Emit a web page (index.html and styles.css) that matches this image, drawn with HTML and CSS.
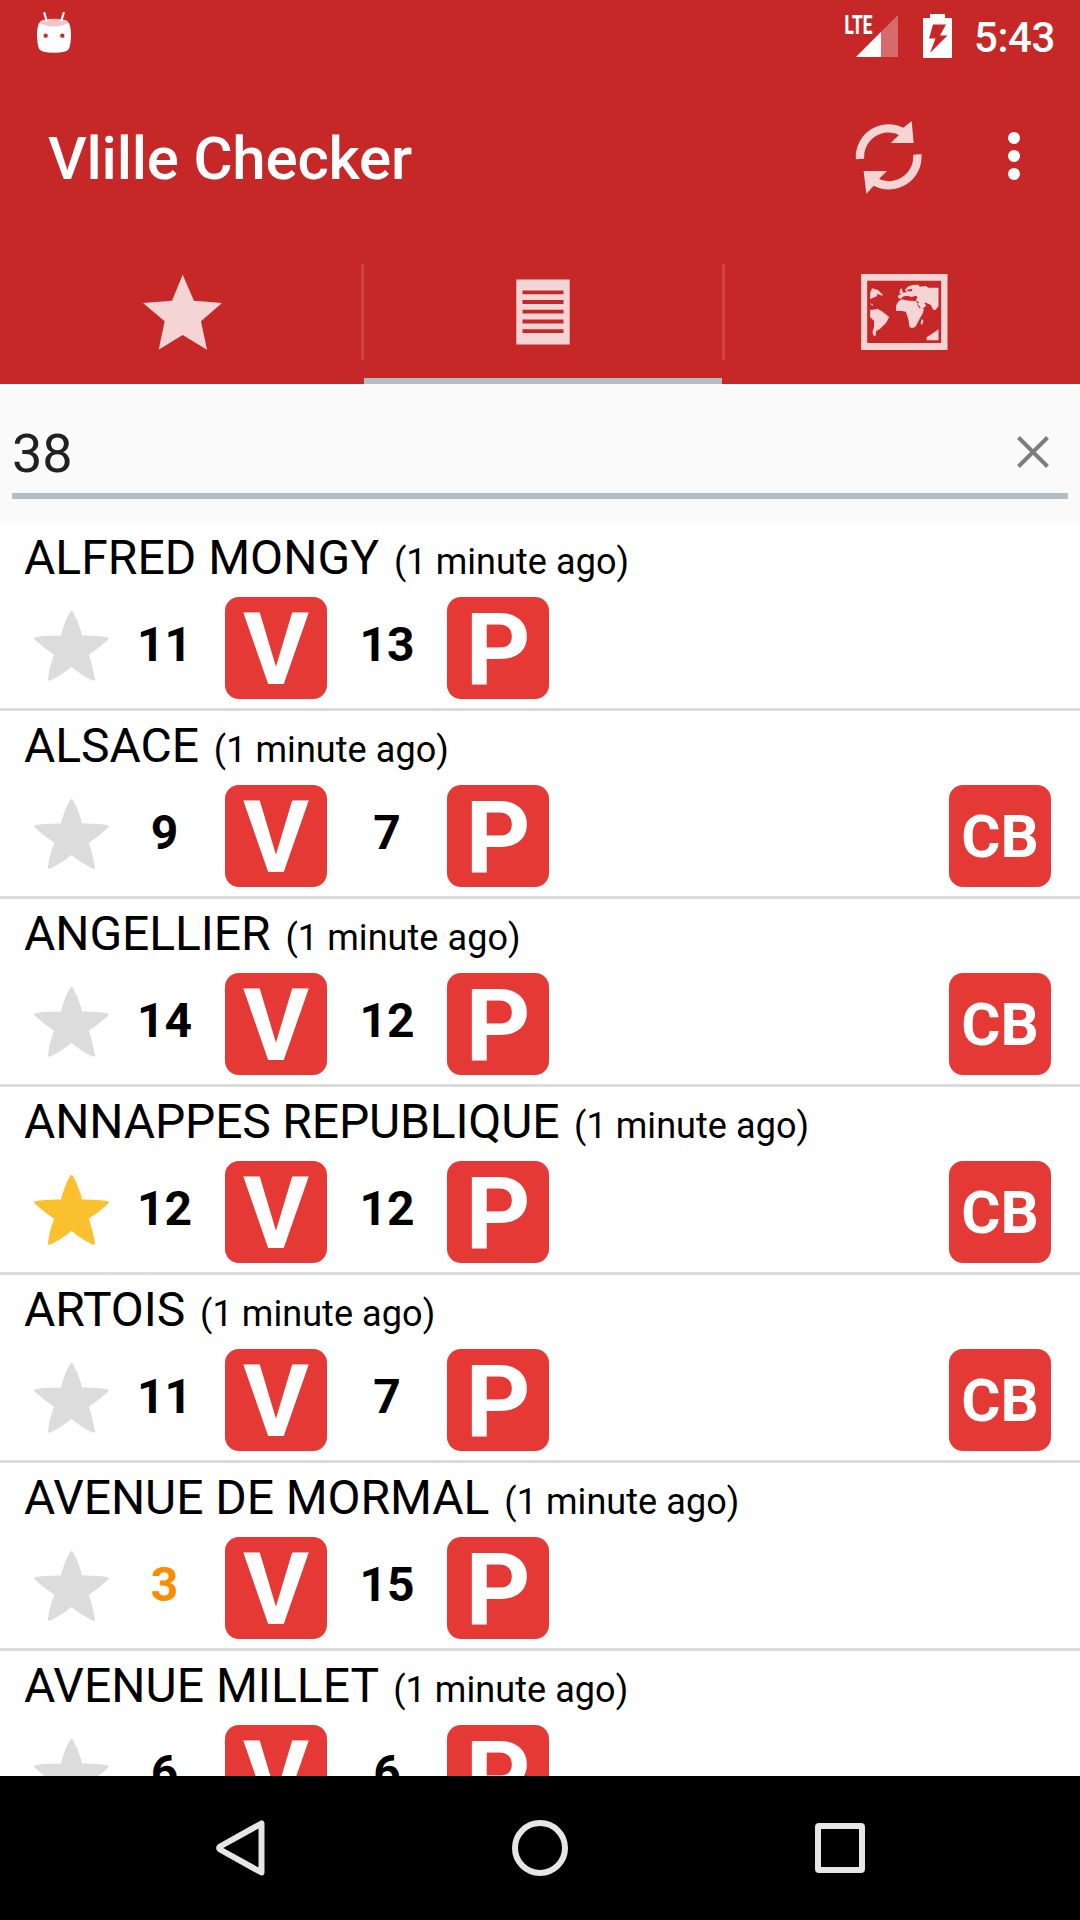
FILE: index.html
```html
<!DOCTYPE html>
<html lang="en">
<head>
<meta charset="utf-8">
<title>Vlille Checker</title>
<link rel="stylesheet" href="styles.css">
</head>
<body>
<svg class="defs" width="0" height="0">
  <symbol id="star" viewBox="0 0 226 211">
    <path d="M108 4Q113-4 118 4Q135 35 145 74Q190 73 222 79Q228 81 224 86Q195 113 165 132Q176 163 184 206Q184 212 178 210Q143 194 113 169Q83 194 48 210Q42 212 42 206Q47 165 61 132Q31 113 2 86Q-2 81 4 79Q36 73 81 74Q91 35 108 4Z"/>
  </symbol>
</svg>
<header class="header">
  <div class="status">
    <svg class="marsh" width="34" height="41" viewBox="0 0 102 123">
      <ellipse cx="51" cy="32" rx="43" ry="12" fill="#f1c4c5"/>
      <path d="M6 32Q28 43 51 43T96 32Q102 46 102 65Q102 95 96 110Q90 122 51 122T6 110Q0 95 0 65Q0 46 6 32Z" fill="#fff"/>
      <path d="M22 3L29 27M80 3L73 27" stroke="#fff" stroke-width="6.500" stroke-linecap="round"/>
      <circle cx="26" cy="71" r="6.500" fill="#c62828"/><circle cx="76" cy="71" r="6.500" fill="#c62828"/>
    </svg>
    <svg class="signal" width="54" height="43" viewBox="0 0 54 43">
      <path d="M53 0V42H11Z" fill="#d76a6a"/><path d="M36 17V42H11Z" fill="#fff"/>
      <path d="M0 0H29V18.500H0Z" fill="#c62828"/>
      <text x="-.5" y="18.500" textLength="28" lengthAdjust="spacingAndGlyphs" class="lte">LTE</text>
    </svg>
    <svg class="battery" width="29" height="44" viewBox="0 0 29 44">
      <path d="M7 0H22V4H29V44H0V4H7Z" fill="#fff"/>
      <path d="M10 10.500H23L17 21.500H24.500L7 39L12.500 24.500H6Z" fill="#c62828"/>
    </svg>
    <span class="clock">5:43</span>
  </div>
  <div class="toolbar">
    <h1 class="title">Vlille Checker</h1>
    <svg class="refresh" width="67" height="74" viewBox="224 360 201 222">
      <g fill="none" stroke="#f4d4d5" stroke-width="25"><path d="M239 477A86 86 0 0 1 367 396"/><path d="M411 463A86 86 0 0 1 283 545"/></g>
      <path d="M394 363L400 429H331L356 405L368 384ZM258 581L250 513H320L296 537L282 556Z" fill="#f4d4d5"/>
    </svg>
    <svg class="more" width="12" height="48" viewBox="0 0 12 48" fill="#fff"><circle cx="6" cy="6" r="6"/><circle cx="6" cy="24" r="6"/><circle cx="6" cy="42" r="6"/></svg>
  </div>
  <nav class="tabs">
    <div class="tab">
      <svg width="79" height="76" viewBox="127 102 237 228"><path d="M246 104L280 182L364 189L301 244L319 329L246 285L174 329L192 244L127 189L214 182Z" fill="#f4d4d5"/></svg>
    </div>
    <div class="tab active">
      <svg width="54" height="66" viewBox="0 0 54 66"><path d="M.3 .5H53.700V65.500H.3Z" fill="#f4d4d5"/><path d="M6.500 13.300H47.500M6.500 23H47.500M6.500 32.700H47.500M6.500 42.500H47.500M6.500 52.200H47.500" stroke="#c62828" stroke-width="3.800"/></svg>
    </div>
    <div class="tab">
      <svg width="87" height="76" viewBox="483 72 260 228">
        <path fill-rule="evenodd" fill="#f4d4d5" d="M483 72H742V300H483ZM501 92V279H723V92Z"/>
        <path fill="#f4d4d5" d="M510 148V127L516 115L533 120L548 134L546 137L531 131V138ZM509 159L519 164L517 168ZM510 180L533 177L545 184L567 201L558 218L540 236L528 244L526 259L519 256L517 245L522 230V213L510 202ZM588 182L587 169L595 154L605 148L618 151L629 152L648 153L658 168L671 177L668 190L660 203L654 215L646 230L636 235L628 231L625 210L617 185L605 183ZM665 207L670 213L666 224L661 221ZM680 271L679 262L696 251L715 238V271ZM593 143L595 135L604 133L598 129L599 119L605 115L608 128L621 126L614 121L623 110L637 105L656 104L658 110L678 108L684 113H715V168L706 180L699 179L692 165L679 159L672 157L678 168L664 178L651 163L657 157L647 151L652 142L646 138L635 142L622 137L607 141L602 147Z"/>
        <path d="M618 120L637 116L635 124L625 124ZM610 139Q629 144 651 138L643 150Q627 151 610 144ZM648 158L662 173L657 174Z" fill="#c62828"/>
      </svg>
    </div>
  </nav>
</header>
<section class="search">
  <div class="field"><span>38</span>
    <svg width="32" height="32" viewBox="0 0 32 32"><path d="M1.500 1.500L30.500 30.500M30.500 1.500L1.500 30.500" stroke="#7d7d7d" stroke-width="3.900"/></svg>
  </div>
</section>
<main class="list">
  <article class="row"><h2 class="name wide">ALFRED MONGY <small>(1 minute ago)</small></h2>
    <div class="info"><svg class="star"><use href="#star"/></svg><b class="count">11</b><span class="badge">V</span><b class="count">13</b><span class="badge">P</span></div></article>
  <article class="row"><h2 class="name">ALSACE <small>(1 minute ago)</small></h2>
    <div class="info"><svg class="star"><use href="#star"/></svg><b class="count">9</b><span class="badge">V</span><b class="count">7</b><span class="badge">P</span><span class="badge card">CB</span></div></article>
  <article class="row"><h2 class="name">ANGELLIER <small>(1 minute ago)</small></h2>
    <div class="info"><svg class="star"><use href="#star"/></svg><b class="count">14</b><span class="badge">V</span><b class="count">12</b><span class="badge">P</span><span class="badge card">CB</span></div></article>
  <article class="row"><h2 class="name long">ANNAPPES REPUBLIQUE <small>(1 minute ago)</small></h2>
    <div class="info"><svg class="star favorite"><use href="#star"/></svg><b class="count">12</b><span class="badge">V</span><b class="count">12</b><span class="badge">P</span><span class="badge card">CB</span></div></article>
  <article class="row"><h2 class="name">ARTOIS <small>(1 minute ago)</small></h2>
    <div class="info"><svg class="star"><use href="#star"/></svg><b class="count">11</b><span class="badge">V</span><b class="count">7</b><span class="badge">P</span><span class="badge card">CB</span></div></article>
  <article class="row"><h2 class="name">AVENUE DE MORMAL <small>(1 minute ago)</small></h2>
    <div class="info"><svg class="star"><use href="#star"/></svg><b class="count low">3</b><span class="badge">V</span><b class="count">15</b><span class="badge">P</span></div></article>
  <article class="row"><h2 class="name wide">AVENUE MILLET <small>(1 minute ago)</small></h2>
    <div class="info"><svg class="star"><use href="#star"/></svg><b class="count">6</b><span class="badge">V</span><b class="count">6</b><span class="badge">P</span></div></article>
</main>
<footer class="navbar">
  <svg width="50" height="56" viewBox="0 0 50 56"><path d="M45.500 3.500V52.500L4 29.500Q2.500 28 4 26.500Z" class="line"/></svg>
  <svg width="56" height="56" viewBox="0 0 56 56"><circle cx="28" cy="28" r="25" class="line"/></svg>
  <svg width="50" height="50" viewBox="0 0 50 50"><rect x="3" y="3" width="44" height="44" rx="1" class="line"/></svg>
</footer>
</body>
</html>
```
FILE: styles.css
```css
* { box-sizing: border-box; }
body {
  margin: 0;
  width: 1080px;
  height: 1920px;
  overflow: hidden;
  display: flex;
  flex-direction: column;
  background: #fafafa;
  color: #000;
  font-family: Roboto, sans-serif;
}
svg { display: block; flex: none; overflow: visible; }
.defs { position: absolute; }
.header { height: 384px; flex: none; background: #c62828; color: #fff; }
.status { height: 72px; display: flex; align-items: flex-start; padding: 12px 25px 0 37px; }
.signal { margin: 3px 0 0 auto; }
.lte { font-size: 26px; font-weight: 800; fill: #fff; }
.battery { margin: 2px 0 0 24px; }
.clock { margin: 1px 0 0 22px; font-size: 42px; line-height: 49px; font-weight: 500; letter-spacing: -0.4px; }
.toolbar { height: 168px; display: flex; align-items: center; padding: 0 60px 0 48px; }
.title { margin: 5px 0 0; font-size: 60px; font-weight: 500; line-height: 72px; letter-spacing: -0.22px; }
.refresh { margin-left: auto; margin-top: 1px; }
.more { margin-left: 86px; }
.tabs { height: 144px; display: grid; grid-template-columns: 364px 358px 358px; }
.tab {
  display: flex;
  align-items: center;
  justify-content: center;
  border-bottom: 6px solid transparent;
  padding-top: 6px;
  background: linear-gradient(#cf4345, #cf4345) right 24px / 3px 96px no-repeat;
}
.tab.active { border-color: #b0bec5; background: none; }
.tab:last-child { background-position: left 24px; padding-left: 6px; }
.search { height: 139px; flex: none; padding: 0 12px 24px; }
.field {
  height: 115px;
  display: flex;
  align-items: center;
  justify-content: space-between;
  padding: 26px 19px 0 0;
  border-bottom: 6px solid #b0bec5;
  color: #212121;
  font-size: 54px;
  line-height: 64px;
}
.field span { padding-top: 4px; }
.list { height: 1253px; flex: none; overflow: hidden; background: #fff; }
.row { height: 188px; border-bottom: 3px solid #dcdcdc; }
.name { height: 74px; margin: 0; padding: 6px 0 0 24px; font-size: 48px; line-height: 57px; font-weight: 400; letter-spacing: -0.06px; white-space: nowrap; }
.name.wide { letter-spacing: 0.03px; }
.name.long { letter-spacing: -0.16px; }
.name small { margin-left: 3px; font-size: 36px; letter-spacing: 0.07px; }
.info { display: flex; align-items: center; padding: 0 29px 0 34px; }
.star { width: 75px; height: 70px; margin: -4px -6px 0 0; fill: #dcdcdc; }
.star.favorite { fill: #fbc02d; }
.count { width: 122px; padding: 0 0 7px 1px; text-align: center; font-size: 48px; line-height: 56px; }
.badge + .count { width: 120px; padding-left: 0; }
.count.low { color: #fb8c00; }
.badge {
  width: 102px;
  height: 102px;
  padding-top: 3px;
  border-radius: 14px;
  background: #e53935;
  color: #fff;
  text-align: center;
  font-size: 101px;
  line-height: 99px;
  font-weight: 700;
}
.badge.card { margin-left: auto; font-size: 60px; padding-top: 1px; line-height: 101px; }
.navbar {
  height: 144px;
  flex: none;
  display: grid;
  grid-template-columns: 49px 56px 50px;
  column-gap: 247px;
  align-items: center;
  padding-left: 216px;
  background: #000;
}
.line { fill: none; stroke: #e6e6e6; stroke-width: 6; stroke-linejoin: round; }
```
